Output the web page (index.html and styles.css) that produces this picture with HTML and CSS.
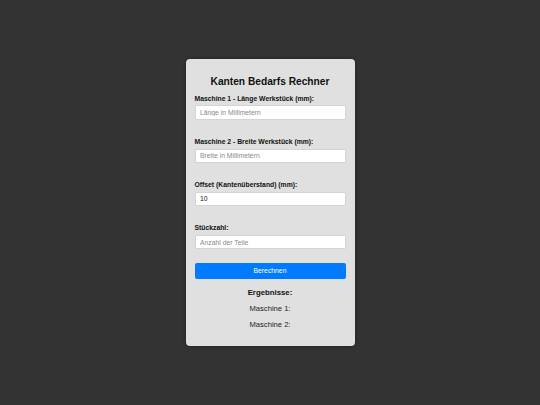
FILE: index.html
```html
<!DOCTYPE html>
<html lang="de">
<head>
<meta charset="utf-8">
<title>Kanten Bedarfs Rechner</title>
<link rel="stylesheet" href="styles.css">
</head>
<body>
<div class="card">
  <h2 class="title">Kanten Bedarfs Rechner</h2>
  <div class="group">
    <label class="label">Maschine 1 - Länge Werkstück (mm):</label>
    <input class="field" type="text" placeholder="Länge in Millimetern">
  </div>
  <div class="group">
    <label class="label">Maschine 2 - Breite Werkstück (mm):</label>
    <input class="field" type="text" placeholder="Breite in Millimetern">
  </div>
  <div class="group">
    <label class="label">Offset (Kantenüberstand) (mm):</label>
    <input class="field" type="text" value="10">
  </div>
  <div class="group last">
    <label class="label">Stückzahl:</label>
    <input class="field" type="text" placeholder="Anzahl der Teile">
  </div>
  <button class="btn" type="button">Berechnen</button>
  <h3 class="res-title">Ergebnisse:</h3>
  <p class="res">Maschine 1:</p>
  <p class="res">Maschine 2:</p>
</div>
</body>
</html>
```
FILE: styles.css
```css
html, body {
  margin: 0;
  padding: 0;
}
body {
  background: #333333;
  height: 405px;
  display: flex;
  align-items: center;
  justify-content: center;
  font-family: "Liberation Sans", Arial, sans-serif;
  color: #111;
}
.card {
  width: 169px;
  box-sizing: border-box;
  padding: 9px;
  background: #e0e0e0;
  border-radius: 4px;
  box-shadow: 0 0 4px rgba(0,0,0,0.35);
  display: flex;
  flex-direction: column;
}
.title {
  margin: 8.5px 0 6px;
  font-size: 10.2px;
  line-height: 12.5px;
  font-weight: bold;
  text-align: center;
  color: #111;
}
.group {
  display: flex;
  flex-direction: column;
  margin-bottom: 18px;
}
.group.last {
  margin-bottom: 13.2px;
}
.label {
  font-size: 6.8px;
  line-height: 8px;
  font-weight: bold;
  margin-bottom: 2.7px;
  color: #111;
}
.field {
  box-sizing: border-box;
  width: 100%;
  height: 14.5px;
  margin: 0;
  padding: 0 4.5px;
  border: 0.5px solid #d4d4d4;
  border-radius: 1px;
  background: #fff;
  font-family: "Liberation Sans", Arial, sans-serif;
  font-size: 6.8px;
  color: #111;
  outline: none;
}
.field::placeholder {
  color: #8a8a8a;
}
.btn {
  height: 16px;
  margin: 0;
  padding: 0;
  border: none;
  border-radius: 2px;
  background: #007bff;
  color: #fff;
  font-family: "Liberation Sans", Arial, sans-serif;
  font-size: 6.8px;
}
.res-title {
  margin: 8px 0 0;
  font-size: 7.8px;
  line-height: 11px;
  font-weight: bold;
  text-align: center;
  color: #111;
}
.res {
  margin: 6.8px 0 0;
  font-size: 7.6px;
  line-height: 10px;
  text-align: center;
  color: #222;
}
.res:last-child {
  margin-top: 6px;
  margin-bottom: 7px;
}
```
